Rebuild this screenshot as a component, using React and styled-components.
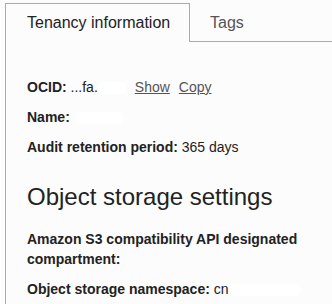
import React from 'react'
import styled, { createGlobalStyle } from 'styled-components'

const GlobalStyle = createGlobalStyle`
    html, body {
        margin: 0;
        padding: 0;
        background: #fcfcfc;
    }
    body {
        font-family: "Liberation Sans", Arial, sans-serif;
        color: #222;
    }
`

function App() {
    return (
        <Page>
            <GlobalStyle />
            <Panel>
                <TabList>
                    <Tab active>Tenancy information</Tab>
                    <Tab>Tags</Tab>
                    <TabFiller />
                </TabList>
                <Content>
                    <Row>
                        <Label>OCID:</Label> ...fa.<Redacted w={28} />
                        <LinkText>Show</LinkText>
                        <LinkText>Copy</LinkText>
                    </Row>
                    <Row>
                        <Label>Name:</Label> <Redacted w={50} />
                    </Row>
                    <Row>
                        <Label>Audit retention period:</Label> 365 days
                    </Row>
                    <Heading>Object storage settings</Heading>
                    <Row>
                        <Label>Amazon S3 compatibility API designated compartment:</Label>
                    </Row>
                    <Row>
                        <Label>Object storage namespace:</Label> cn<Redacted w={72} />
                    </Row>
                </Content>
            </Panel>
        </Page>
    )
}

export default App

const Page = styled.div`
    padding: 3px 0 0 5px;
    height: 301px;
    overflow: hidden;
`

const Panel = styled.div`
    border-left: 1px solid #aaa;
    height: 100%;
`

const TabList = styled.div`
    display: flex;
    height: 39px;
`

const Tab = styled.div`
    box-sizing: border-box;
    width: ${props => props.active ? '184px' : '90px'};
    height: 39px;
    padding: ${props => props.active ? '9px 0 0 21px' : '10px 0 0 20px'};
    font-size: 16px;
    line-height: 20px;
    color: ${props => props.active ? '#222' : '#555'};
    border-top: ${props => props.active ? '1px solid #aaa' : 'none'};
    border-right: ${props => props.active ? '1px solid #aaa' : 'none'};
    border-bottom: ${props => props.active ? 'none' : '1px solid #aaa'};
`

const TabFiller = styled.div`
    flex: 1;
    border-bottom: 1px solid #aaa;
`

const Content = styled.div`
    padding: 35px 20px 0 21px;
`

const Row = styled.div`
    font-size: 14px;
    line-height: 20px;
    margin-bottom: 10px;
`

const Label = styled.span`
    font-weight: bold;
`

const LinkText = styled.span`
    color: #555;
    text-decoration: underline;
    margin-left: 9px;
`

const Redacted = styled.span`
    display: inline-block;
    width: ${props => props.w}px;
    height: 12px;
    vertical-align: -2px;
    background: #fff;
    border-radius: 5px;
`

const Heading = styled.h2`
    margin: 25px 0 17px;
    font-size: 24px;
    line-height: 30px;
    font-weight: normal;
    color: #222;
`
